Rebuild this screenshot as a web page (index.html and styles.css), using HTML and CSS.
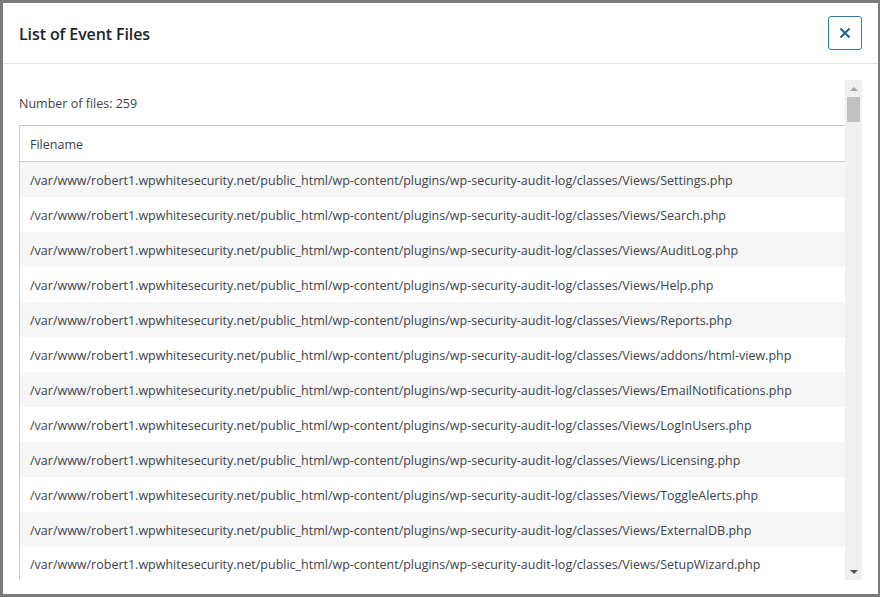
FILE: index.html
```html
<!DOCTYPE html>
<html lang="en">
<head>
<meta charset="utf-8">
<title>List of Event Files</title>
<link rel="stylesheet" href="styles.css">
</head>
<body>
<div class="modal">
  <header class="modal-header">
    <h1 class="modal-title">List of Event Files</h1>
    <button class="close-btn" aria-label="Close">
      <svg width="12" height="12" viewBox="0 0 12 12"><path d="M1.5 1.5 L10.5 10.5 M10.5 1.5 L1.5 10.5" stroke="currentColor" stroke-width="2.2" stroke-linecap="butt"/></svg>
    </button>
  </header>
  <div class="modal-body">
    <div class="scroll-area">
      <div class="scroll-content">
        <p class="count">Number of files: 259</p>
        <table class="files">
          <thead><tr><th>Filename</th></tr></thead>
          <tbody>
            <tr><td>/var/www/robert1.wpwhitesecurity.net/public_html/wp-content/plugins/wp-security-audit-log/classes/Views/Settings.php</td></tr>
            <tr><td>/var/www/robert1.wpwhitesecurity.net/public_html/wp-content/plugins/wp-security-audit-log/classes/Views/Search.php</td></tr>
            <tr><td>/var/www/robert1.wpwhitesecurity.net/public_html/wp-content/plugins/wp-security-audit-log/classes/Views/AuditLog.php</td></tr>
            <tr><td>/var/www/robert1.wpwhitesecurity.net/public_html/wp-content/plugins/wp-security-audit-log/classes/Views/Help.php</td></tr>
            <tr><td>/var/www/robert1.wpwhitesecurity.net/public_html/wp-content/plugins/wp-security-audit-log/classes/Views/Reports.php</td></tr>
            <tr><td>/var/www/robert1.wpwhitesecurity.net/public_html/wp-content/plugins/wp-security-audit-log/classes/Views/addons/html-view.php</td></tr>
            <tr><td>/var/www/robert1.wpwhitesecurity.net/public_html/wp-content/plugins/wp-security-audit-log/classes/Views/EmailNotifications.php</td></tr>
            <tr><td>/var/www/robert1.wpwhitesecurity.net/public_html/wp-content/plugins/wp-security-audit-log/classes/Views/LogInUsers.php</td></tr>
            <tr><td>/var/www/robert1.wpwhitesecurity.net/public_html/wp-content/plugins/wp-security-audit-log/classes/Views/Licensing.php</td></tr>
            <tr><td>/var/www/robert1.wpwhitesecurity.net/public_html/wp-content/plugins/wp-security-audit-log/classes/Views/ToggleAlerts.php</td></tr>
            <tr><td>/var/www/robert1.wpwhitesecurity.net/public_html/wp-content/plugins/wp-security-audit-log/classes/Views/ExternalDB.php</td></tr>
            <tr><td>/var/www/robert1.wpwhitesecurity.net/public_html/wp-content/plugins/wp-security-audit-log/classes/Views/SetupWizard.php</td></tr>
          </tbody>
        </table>
      </div>
      <div class="scrollbar" aria-hidden="true">
        <div class="sb-arrow sb-up"></div>
        <div class="sb-track"><div class="sb-thumb"></div></div>
        <div class="sb-arrow sb-down"></div>
      </div>
    </div>
  </div>
</div>
</body>
</html>
```

FILE: styles.css
```css
* { box-sizing: border-box; }
html, body { margin: 0; padding: 0; }
body {
  background: #7b7b7b;
  width: 880px;
  height: 597px;
  padding: 3px 2px 3px 3px;
  font-family: "Open Sans", "Noto Sans", sans-serif;
  color: #3c434a;
  overflow: hidden;
}
.modal {
  background: #fff;
  width: 875px;
  height: 591px;
  display: flex;
  flex-direction: column;
}
.modal-header {
  height: 61px;
  flex: none;
  display: flex;
  align-items: center;
  justify-content: space-between;
  padding: 0 16px 1px 16px;
  border-bottom: 1px solid #e2e4e6;
}
.modal-title {
  margin: 0;
  padding-top: 3px;
  font-size: 16px;
  font-weight: 600;
  color: #1d2327;
  letter-spacing: -0.1px;
}
.close-btn {
  width: 34px;
  height: 34px;
  border: 1px solid #2f7ea5;
  border-radius: 3px;
  background: #fff;
  color: #22698f;
  display: flex;
  align-items: center;
  justify-content: center;
  padding: 0;
}
.modal-body {
  flex: 1;
  padding: 16px 16px 14px 16px;
  min-height: 0;
}
.scroll-area {
  height: 500px;
  display: flex;
  overflow: hidden;
}
.scroll-content {
  flex: 1;
  min-width: 0;
  overflow: hidden;
}
.count {
  margin: 15px 0 12px 0;
  font-size: 12.5px;
  line-height: 18px;
}
.files {
  width: 827px;
  border-collapse: collapse;
  border: 1px solid #c9cbce;
  font-size: 12.5px;
}
.files th {
  text-align: left;
  font-weight: 400;
  height: 36px;
  padding: 2px 10px 0;
  border-bottom: 1px solid #c9cbce;
  color: #3c434a;
}
.files td {
  height: 35px;
  padding: 2px 10px 0;
  white-space: nowrap;
}
.files tbody tr:nth-child(odd) { background: #f6f6f6; }
.scrollbar {
  width: 17px;
  flex: none;
  background: #f0f0f0;
  display: flex;
  flex-direction: column;
}
.sb-arrow {
  height: 17px;
  flex: none;
  display: flex;
  align-items: center;
  justify-content: center;
}
.sb-up::before {
  content: "";
  border-left: 4px solid transparent;
  border-right: 4px solid transparent;
  border-bottom: 4px solid #a3a3a3;
}
.sb-down::before {
  content: "";
  border-left: 4px solid transparent;
  border-right: 4px solid transparent;
  border-top: 4px solid #505050;
}
.sb-track {
  flex: 1;
  padding: 0 2px;
}
.sb-thumb {
  height: 25px;
  background: #c1c1c1;
}
```
